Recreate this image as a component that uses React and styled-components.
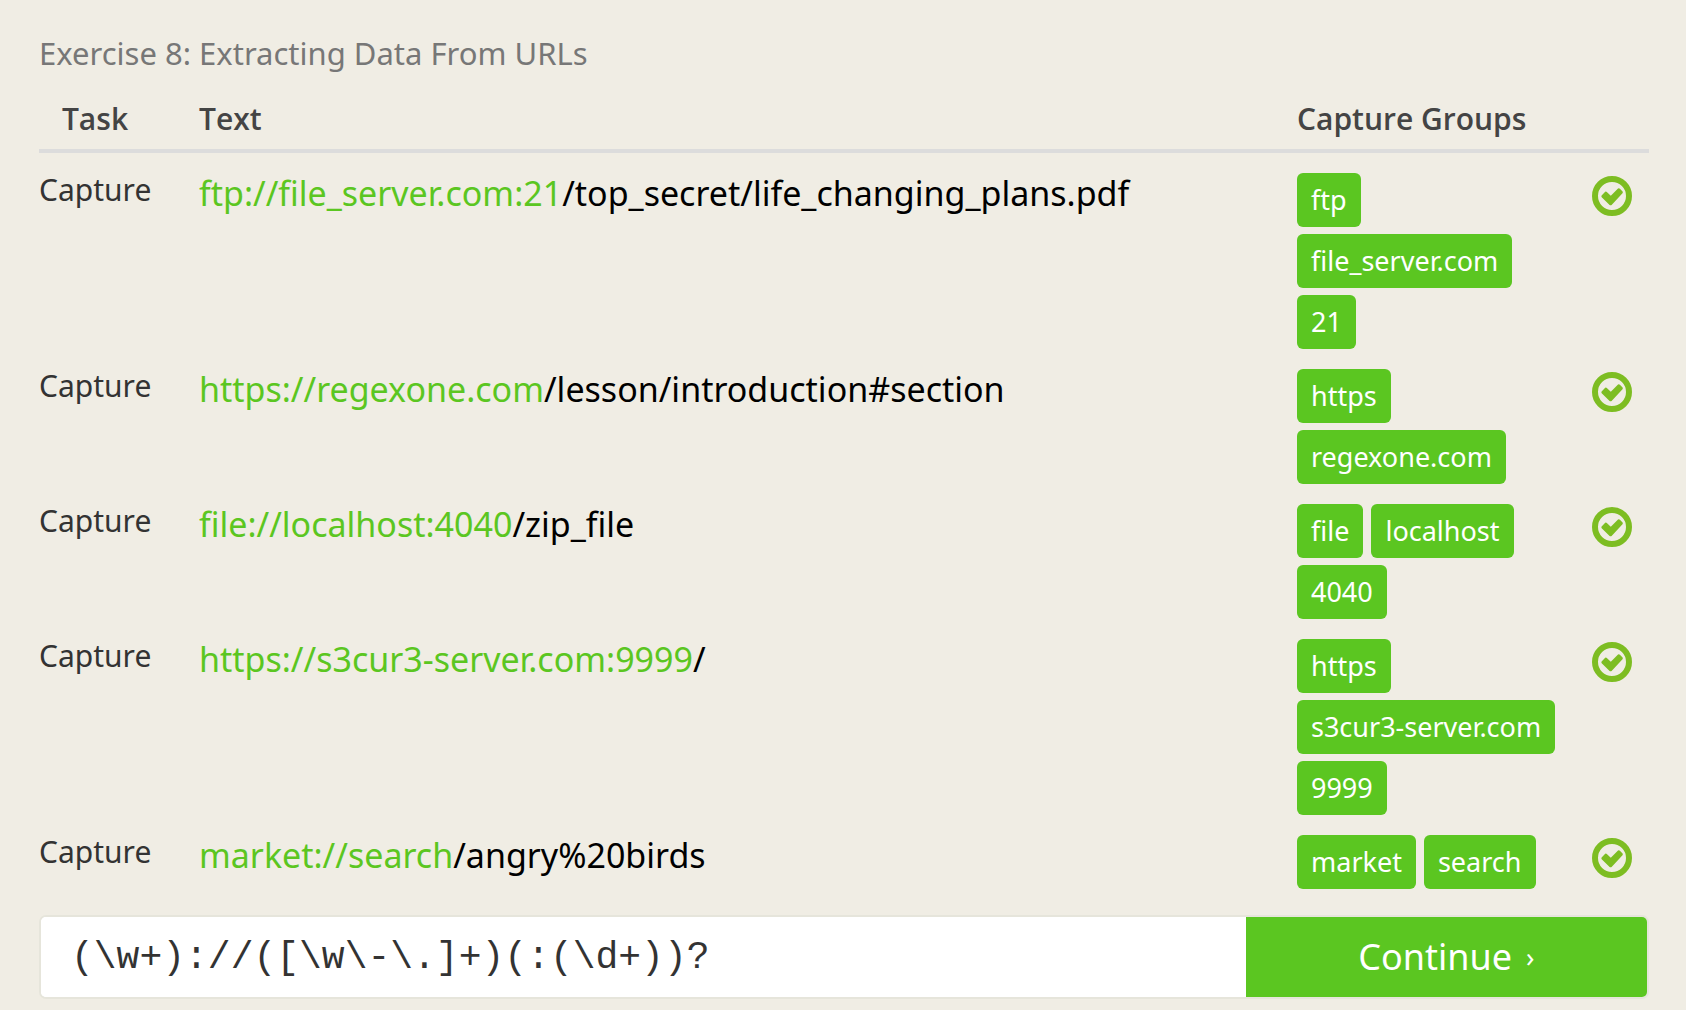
import React, { useState } from "react";
import styled, { createGlobalStyle } from "styled-components";

const sans = `"Noto Sans", "Open Sans", sans-serif`;
const green = "#5bc621";

const GlobalStyle = createGlobalStyle`
  *, *::before, *::after { box-sizing: border-box; }
  body {
    margin: 0;
    background: #f0ede4;
    color: #333;
    font-family: ${sans};
    font-variant-ligatures: none;
  }
`;

const Page = styled.main`
  padding: 33px 37px 11px 39px;
`;

const Title = styled.h1`
  margin: 0 0 26px;
  color: #777;
  font-size: 31px;
  font-weight: 400;
  line-height: 40px;
`;

const TaskTable = styled.table`
  width: 100%;
  table-layout: fixed;
  border-collapse: separate;
  border-spacing: 0;
`;

const Col = styled.col`
  width: ${(p) => p.$width || "auto"};
`;

const HeadCell = styled.th`
  padding: 0 ${(p) => (p.$center ? "48px" : "0")} 10px 0;
  border-bottom: 4px solid #dcdcdc;
  color: #444;
  font-family: "Open Sans", "Noto Sans", sans-serif;
  font-size: 30px;
  font-weight: 600;
  line-height: 40px;
  text-align: ${(p) => (p.$center ? "center" : "left")};
`;

const TaskCell = styled.td`
  padding: 17px 0 0;
  font-size: 30px;
  line-height: 40px;
  vertical-align: top;
`;

const UrlCell = styled.td`
  padding: 18px 0 0;
  color: #000;
  font-size: 34px;
  line-height: 44px;
  vertical-align: top;
  overflow-wrap: anywhere;
`;

const Match = styled.span`
  color: ${green};
`;

const GroupsCell = styled.td`
  padding: 20px 0 0;
  vertical-align: top;
`;

const Chips = styled.div`
  display: flex;
  flex-wrap: wrap;
  gap: 7px 8px;
`;

const Chip = styled.span`
  padding: 7px 14px;
  border-radius: 6px;
  background: ${green};
  color: #fff;
  font-size: 27px;
  line-height: 40px;
`;

const StatusCell = styled.td`
  padding: 23px 17px 0 0;
  vertical-align: top;
`;

const StatusIcon = styled.svg`
  display: block;
  width: 40px;
  height: 40px;
  margin-left: auto;
`;

const AnswerForm = styled.form`
  display: flex;
  height: 84px;
  margin-top: 26px;
  border: 2px solid #e6e5db;
  border-radius: 7px;
  background: #fff;
`;

const AnswerInput = styled.input`
  flex: 1;
  min-width: 0;
  padding: 0 30px;
  border: 0;
  border-radius: 5px 0 0 5px;
  outline: 0;
  background: #fff;
  color: #333;
  font-family: "Liberation Mono", monospace;
  font-size: 38px;
`;

const ContinueButton = styled.button`
  display: flex;
  flex: 0 0 25%;
  align-items: center;
  justify-content: center;
  gap: 14px;
  padding: 0;
  border: 0;
  border-radius: 0 5px 5px 0;
  background: ${green};
  color: #fff;
  font-family: ${sans};
  font-size: 36px;
  line-height: 48px;
  cursor: pointer;
`;

const Arrow = styled.span`
  font-size: 27px;
`;

const tasks = [
  { match: "ftp://file_server.com:21", rest: "/top_secret/life_changing_plans.pdf", groups: ["ftp", "file_server.com", "21"] },
  { match: "https://regexone.com", rest: "/lesson/introduction#section", groups: ["https", "regexone.com"] },
  { match: "file://localhost:4040", rest: "/zip_file", groups: ["file", "localhost", "4040"] },
  { match: "https://s3cur3-server.com:9999", rest: "/", groups: ["https", "s3cur3-server.com", "9999"] },
  { match: "market://search", rest: "/angry%20birds", groups: ["market", "search"] },
];

function DoneIcon() {
  return (
    <StatusIcon viewBox="0 0 40 40" role="img" aria-label="Solved">
      <circle cx="20" cy="20" r="17" fill="none" stroke="#7dbd22" strokeWidth="6" />
      <path
        d="M9.6 19.6 13.2 15.8Q14 15.2 14.8 15.9L18.8 19.8 26 12.6Q27 11.9 27.9 12.7L30.6 15.6Q31.2 16.4 30.5 17.3L19.6 28.9Q18.6 29.8 17.6 28.9L9.7 21.3Q9 20.4 9.6 19.6Z"
        fill="#7dbd22"
      />
    </StatusIcon>
  );
}

export default function App() {
  const [pattern, setPattern] = useState("(\\w+)://([\\w\\-\\.]+)(:(\\d+))?");

  return (
    <>
      <GlobalStyle />
      <Page>
        <Title>Exercise 8: Extracting Data From URLs</Title>
        <TaskTable>
          <colgroup>
            <Col $width="160px" />
            <Col />
            <Col $width="281px" />
            <Col $width="71px" />
          </colgroup>
          <thead>
            <tr>
              <HeadCell scope="col" $center>Task</HeadCell>
              <HeadCell scope="col">Text</HeadCell>
              <HeadCell scope="col" colSpan={2}>Capture Groups</HeadCell>
            </tr>
          </thead>
          <tbody>
            {tasks.map((task) => (
              <tr key={task.match}>
                <TaskCell>Capture</TaskCell>
                <UrlCell>
                  <Match>{task.match}</Match>
                  {task.rest}
                </UrlCell>
                <GroupsCell>
                  <Chips>
                    {task.groups.map((group) => (
                      <Chip key={group}>{group}</Chip>
                    ))}
                  </Chips>
                </GroupsCell>
                <StatusCell>
                  <DoneIcon />
                </StatusCell>
              </tr>
            ))}
          </tbody>
        </TaskTable>
        <AnswerForm onSubmit={(event) => event.preventDefault()}>
          <AnswerInput
            aria-label="Regular expression"
            spellCheck={false}
            value={pattern}
            onChange={(event) => setPattern(event.target.value)}
          />
          <ContinueButton type="submit">
            Continue <Arrow aria-hidden="true">›</Arrow>
          </ContinueButton>
        </AnswerForm>
      </Page>
    </>
  );
}
